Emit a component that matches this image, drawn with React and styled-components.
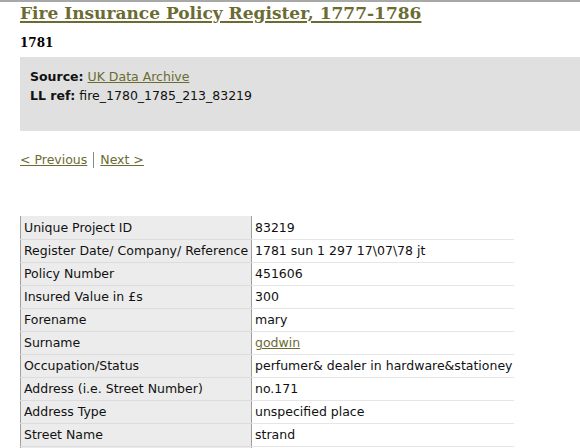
import React from 'react';
import styled, { createGlobalStyle } from 'styled-components';

const GlobalStyle = createGlobalStyle`
    body {
        margin: 0;
        background: #fff;
        font-family: "DejaVu Sans", Verdana, sans-serif;
        font-size: 12.5px;
        color: #111;
    }
`

const Page = styled.div`
    border-top: 2px solid #a8a8a8;
    padding-left: 20px;
`

const Title = styled.h1`
    margin: 0;
    padding-top: 1px;
    font-family: "DejaVu Serif", Georgia, serif;
    font-size: 17px;
    line-height: 20px;
    font-weight: bold;
    a {
        color: #6b6b32;
        text-decoration: underline;
        text-decoration-thickness: 2px;
        text-underline-offset: 2px;
    }
`

const Year = styled.h2`
    margin: 12px 0 0;
    font-family: "DejaVu Serif", Georgia, serif;
    font-size: 12px;
    line-height: 16px;
    font-weight: bold;
    color: #000;
`

const InfoBox = styled.div`
    margin-top: 6px;
    background: #e0e0e0;
    height: 74px;
    box-sizing: border-box;
    padding: 10px 10px 0;
    line-height: 19px;
`

const Label = styled.b`
    font-weight: bold;
`

const Link = styled.a`
    color: #6b6b32;
    text-decoration: underline;
`

const Pager = styled.div`
    margin-top: 20px;
    display: flex;
    align-items: center;
    line-height: 18px;
`

const Sep = styled.span`
    display: inline-block;
    width: 1px;
    height: 16px;
    background: #888;
    margin: 0 6px;
`

const Table = styled.table`
    margin-top: 47px;
    border-collapse: collapse;
    table-layout: fixed;
    width: 494px;
`

const Row = styled.tr`
    height: 23px;
`

const Th = styled.td`
    width: 224px;
    padding: 0 3px;
    background: #ececec;
    border-left: 1px solid #a0a0a0;
    border-right: 1px solid #a0a0a0;
    border-bottom: 1px solid #dcdcdc;
    white-space: nowrap;
    overflow: hidden;
`

const Td = styled.td`
    padding: 0 3px;
    border-bottom: 1px solid #e6e6e6;
    white-space: nowrap;
`

const rows = [
    ['Unique Project ID', '83219'],
    ['Register Date/ Company/ Reference', '1781 sun 1 297 17\\07\\78 jt'],
    ['Policy Number', '451606'],
    ['Insured Value in £s', '300'],
    ['Forename', 'mary'],
    ['Surname', 'godwin', true],
    ['Occupation/Status', 'perfumer& dealer in hardware&stationey'],
    ['Address (i.e. Street Number)', 'no.171'],
    ['Address Type', 'unspecified place'],
    ['Street Name', 'strand'],
    ['', ''],
]

const App = () => {
    return (
        <>
            <GlobalStyle />
            <Page>
                <Title><a href="#">Fire Insurance Policy Register, 1777-1786</a></Title>
                <Year>1781</Year>
                <InfoBox>
                    <div><Label>Source:</Label> <Link href="#">UK Data Archive</Link></div>
                    <div><Label>LL ref:</Label> fire_1780_1785_213_83219</div>
                </InfoBox>
                <Pager>
                    <Link href="#">&lt; Previous</Link>
                    <Sep />
                    <Link href="#">Next &gt;</Link>
                </Pager>
                <Table>
                    <tbody>
                        {rows.map(([label, value, linked], i) => (
                            <Row key={i}>
                                <Th>{label}</Th>
                                <Td>{linked ? <Link href="#">{value}</Link> : value}</Td>
                            </Row>
                        ))}
                    </tbody>
                </Table>
            </Page>
        </>
    );
}

export default App;
